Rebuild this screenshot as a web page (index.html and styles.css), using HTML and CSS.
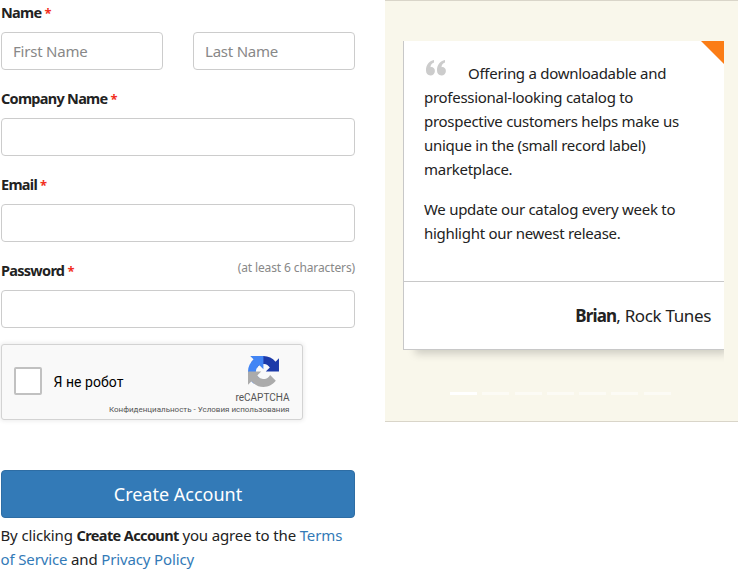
FILE: index.html
```html
<!DOCTYPE html>
<html lang="en">
<head>
<meta charset="utf-8">
<title>Create Account</title>
<link rel="stylesheet" href="styles.css">
</head>
<body>
<main class="page">
  <form class="signup">
    <div class="group">
      <div class="label-row"><label class="label">Name <span class="req">*</span></label></div>
      <div class="names">
        <input class="input" type="text" placeholder="First Name">
        <input class="input" type="text" placeholder="Last Name">
      </div>
    </div>
    <div class="group">
      <div class="label-row"><label class="label">Company Name <span class="req">*</span></label></div>
      <input class="input" type="text">
    </div>
    <div class="group">
      <div class="label-row"><label class="label">Email <span class="req">*</span></label></div>
      <input class="input" type="email">
    </div>
    <div class="group">
      <div class="label-row"><label class="label">Password <span class="req">*</span></label><span class="hint">(at least 6 characters)</span></div>
      <input class="input" type="password">
    </div>
    <div class="captcha">
      <div class="check"></div>
      <div class="robot">Я не робот</div>
      <div class="brand">
        <svg class="logo" viewBox="0 0 64 64" width="31" height="31">
          <path fill="#1c3aa9" d="M64 31.955l-.033-1.370V4.687l-7.160 7.160C50.948 4.674 42.033.093 32.050.093c-10.400 0-19.622 4.960-25.458 12.640l11.736 11.860a15.550 15.550 0 0 1 4.754-5.334c2.050-1.600 4.952-2.906 8.968-2.906.485 0 .860.057 1.135.163 4.976.393 9.288 3.140 11.828 7.124l-8.307 8.307L64 31.953"/>
          <path fill="#4285f4" d="M31.862.094l-1.370.033H4.594l7.160 7.160C4.580 13.147 0 22.060 0 32.046c0 10.400 4.960 19.622 12.640 25.458L24.500 45.768a15.550 15.550 0 0 1-5.334-4.754c-1.600-2.050-2.906-4.952-2.906-8.968 0-.485.057-.860.163-1.135.393-4.976 3.140-9.288 7.124-11.828l8.307 8.307L31.860.095"/>
          <path fill="#ababab" d="M.001 32.045l.033 1.370v25.898l7.160-7.160c5.860 7.173 14.774 11.754 24.760 11.754 10.400 0 19.622-4.960 25.458-12.640l-11.736-11.860a15.550 15.550 0 0 1-4.754 5.334c-2.050 1.600-4.952 2.906-8.968 2.906-.485 0-.860-.057-1.135-.163-4.976-.393-9.288-3.140-11.828-7.124l8.307-8.307c-10.522.040-22.400.066-27.295-.005"/>
        </svg>
        <div class="brand-name">reCAPTCHA</div>
        <div class="terms">Конфиденциальность - Условия использования</div>
      </div>
    </div>
    <button class="submit" type="button">Create Account</button>
    <p class="legal">By clicking <b>Create Account</b> you agree to the <a>Terms</a><br><a>of Service</a> and <a>Privacy Policy</a></p>
  </form>
  <aside class="panel">
    <div class="viewport">
      <article class="card">
        <div class="quote">
          <p><svg class="mark" viewBox="0 0 20 16" width="20" height="16"><path id="q" fill="#ccc" d="M8 0v2.500C5.800 3.200 4.600 4.800 4.500 7.200 7 6.700 8.900 8.600 8.900 11c0 2.500-1.900 4.500-4.500 4.500C1.600 15.500 0 13.500 0 10.300 0 5 3 1 8 0z"/><use href="#q" x="11"/></svg>Offering a downloadable and<br>professional-looking catalog to<br>prospective customers helps make us<br>unique in the (small record label)<br>marketplace.</p>
          <p>We update our catalog every week to<br>highlight our newest release.</p>
        </div>
        <div class="author"><b>Brian</b>, Rock Tunes</div>
      </article>
    </div>
    <div class="dots"><i class="dot on"></i><i class="dot"></i><i class="dot"></i><i class="dot"></i><i class="dot"></i><i class="dot"></i><i class="dot"></i></div>
  </aside>
</main>
</body>
</html>
```
FILE: styles.css
```css
* { box-sizing: border-box; }
body { margin: 0; background: #fff; color: #222; font: 15px/24px "Noto Sans", sans-serif; letter-spacing: -0.28px; overflow: hidden; }
.page { display: flex; align-items: flex-start; gap: 30px; height: 587px; }
.signup { width: 355px; flex: none; padding-left: 1px; }
.group { margin-bottom: 16px; }
.label-row { display: flex; justify-content: space-between; height: 24px; margin-bottom: 8px; white-space: nowrap; }
.label { font-weight: 700; font-size: 14.5px; letter-spacing: -0.72px; }
.req { color: #f22f22; font-size: 13px; }
.hint { font-size: 12px; line-height: 20px; letter-spacing: -0.12px; color: #888; }
.names { display: grid; grid-template-columns: 1fr 1fr; gap: 30px; }
.input { display: block; width: 100%; height: 38px; border: 1px solid #ccc; border-radius: 4px; padding: 0 11px; background: #fff; font: inherit; letter-spacing: -0.22px; }
.input::placeholder { color: #888; opacity: 1; }
.captcha { display: flex; width: 302px; height: 76px; border: 1px solid #d3d3d3; border-radius: 3px; background: #f9f9f9; box-shadow: 0 0 4px 1px rgba(0,0,0,.08); font-family: Roboto, sans-serif; letter-spacing: 0; }
.check { width: 28px; height: 28px; margin: 22px 0 0 12px; border: 2px solid #c1c1c1; border-radius: 2px; background: #fff; }
.robot { margin: 25px 0 0 11.5px; font-size: 14px; letter-spacing: 0.05px; color: #000; white-space: nowrap; }
.brand { display: flex; flex-direction: column; align-items: flex-end; margin-left: auto; width: 0; padding: 11px 0 0; margin-right: 12.5px; color: #555; white-space: nowrap; }
.logo { margin-right: 10.5px; flex: none; }
.brand-name { font-size: 10px; line-height: 12px; margin-top: 5px; }
.terms { font-size: 8px; line-height: 11px; }
.submit { display: block; width: 354px; height: 48px; margin-top: 50px; border: 1px solid #2e6da4; border-radius: 4px; background: #337ab7; color: #fff; font: 18px/24px "Noto Sans", sans-serif; letter-spacing: 0; padding: 0; }
.legal { margin: 5px 0 0 -0.5px; white-space: nowrap; letter-spacing: -0.14px; }
.legal b { font-size: 14.5px; letter-spacing: -0.62px; }
.legal a { color: #337ab7; }
.panel { width: 353px; height: 422px; flex: none; background: #f9f7eb; border-top: 1px solid #d9d5c9; border-bottom: 1px solid #d9d5c9; padding: 40px 14px 0 18px; }
.viewport { height: 335px; overflow: hidden; }
.card { position: relative; height: 309px; background: #fff; border-left: 1px solid #c8c8c8; border-bottom: 1px solid #c8c8c8; box-shadow: 8px 8px 8px -4px rgba(0,0,0,.17); }
.card::after { content: ""; position: absolute; top: 0; right: 0; border-top: 23px solid #fb7d16; border-left: 23px solid transparent; }
.quote { height: 241px; padding: 20px 0 0 20px; border-bottom: 1px solid #c8c8c8; white-space: nowrap; }
.quote p { margin: 0 0 16px; }
.mark { margin: 0 22px 0 2px; vertical-align: 2px; transform: translateY(-1px); }
.author { padding: 22px 13px 0 0; text-align: right; font-size: 17px; letter-spacing: -0.35px; }
.author b { letter-spacing: -0.8px; }
.dots { display: flex; gap: 5.300px; margin: 15px 0 0 47px; }
.dot { width: 27px; height: 3px; margin-top: 1px; background: rgba(255,255,255,.5); }
.dot.on { background: #fff; }
```
